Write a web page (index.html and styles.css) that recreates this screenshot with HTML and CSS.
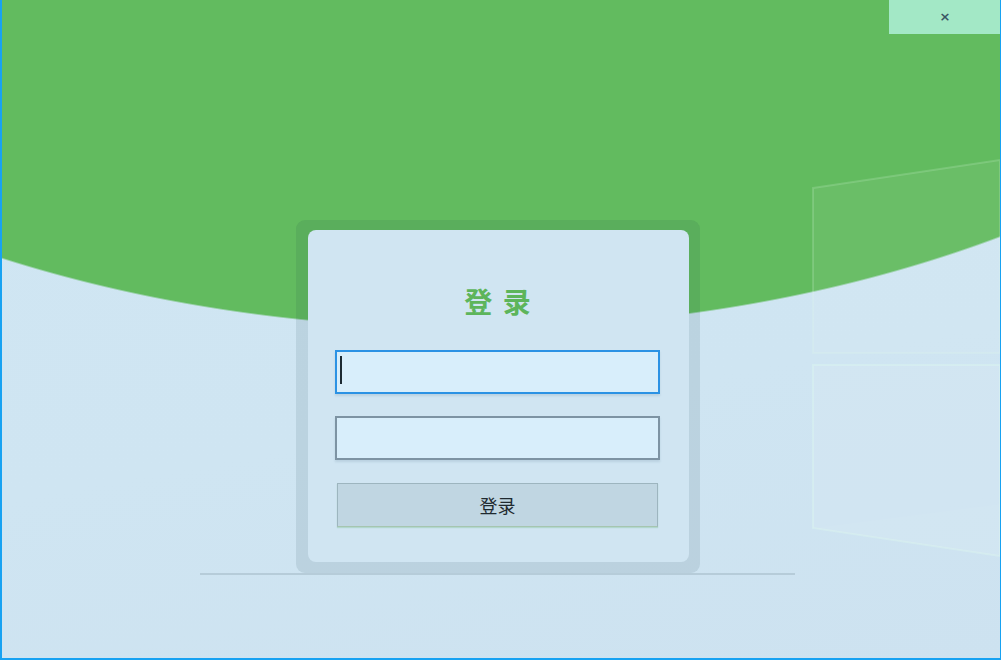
FILE: index.html
```html
<!DOCTYPE html>
<html lang="zh-CN">
<head>
<meta charset="utf-8">
<title>登录</title>
<link rel="stylesheet" href="styles.css">
</head>
<body>
<div class="window">
  <svg class="backdrop" width="998" height="658" viewBox="0 0 998 658" aria-hidden="true">
    <polygon points="811,188 998,160 998,353 811,353" fill="rgba(255,255,255,0.05)" stroke="rgba(225,255,235,0.18)" stroke-width="2"/>
    <polygon points="811,365 998,365 998,556 811,528" fill="rgba(255,255,255,0.07)" stroke="rgba(225,255,240,0.3)" stroke-width="2"/>
    <polygon points="811,528 998,504 998,556" fill="rgba(255,255,255,0.04)"/>
  </svg>
  <div class="titlebar">
    <button class="close" type="button" aria-label="关闭">×</button>
  </div>
  <div class="stage">
    <div class="frame">
      <form class="card">
        <h1 class="title">登 录</h1>
        <label class="field focused"><input type="text" aria-label="用户名"></label>
        <label class="field"><input type="password" aria-label="密码"></label>
        <button class="submit" type="button">登录</button>
      </form>
    </div>
  </div>
</div>
</body>
</html>
```
FILE: styles.css
```css
* { box-sizing: border-box; }
html, body { margin: 0; padding: 0; }
body {
  width: 1001px;
  height: 660px;
  overflow: hidden;
  font-family: "Noto Sans CJK SC", "Noto Sans", sans-serif;
}
.window {
  position: relative;
  width: 1001px;
  height: 660px;
  border-left: 2px solid #17a2f2;
  border-right: 1px solid #17a2f2;
  border-bottom: 2px solid #17a2f2;
  background:
    radial-gradient(ellipse 1000px 600px at 468px -271px, #62bb5f 99.7%, rgba(98,187,95,0) 100%),
    linear-gradient(170deg, #d0e6f3 0%, #cfe5f2 60%, #cde2f0 100%);
  display: flex;
  flex-direction: column;
}
.backdrop {
  position: absolute;
  left: 0;
  top: 0;
  pointer-events: none;
}
.titlebar {
  position: relative;
  display: flex;
  justify-content: flex-end;
  height: 34px;
}
.close {
  width: 111px;
  height: 34px;
  border: 0;
  margin: 0;
  padding: 0;
  background: #a3e8c6;
  color: #3a5564;
  font-family: "DejaVu Sans", sans-serif;
  font-size: 13px;
  font-weight: bold;
  line-height: 34px;
  text-align: center;
  padding-left: 1px;
}
.stage {
  position: relative;
  margin-top: 186px;
  margin-left: 198px;
  width: 595px;
  padding-left: 96px;
  border-bottom: 2px solid #b6ccd9;
}
.frame {
  width: 404px;
  height: 353px;
  padding: 10px 11px 11px 12px;
  border-radius: 9px;
  background: rgba(20, 60, 70, 0.1);
}
.card {
  height: 332px;
  margin: 0;
  border-radius: 8px;
  background: #d0e5f2;
  padding: 55px 29px 0 27px;
  display: flex;
  flex-direction: column;
}
.title {
  margin: 0;
  height: 32px;
  line-height: 32px;
  font-size: 28px;
  font-weight: bold;
  color: #5db55b;
  text-align: center;
  letter-spacing: 2px;
  padding-left: 2px;
}
.field {
  position: relative;
  display: block;
  height: 44px;
  margin-top: 33px;
  box-shadow: 0 2px 2px rgba(120, 150, 170, 0.25);
}
.field + .field { margin-top: 22px; }
.field input {
  display: block;
  width: 100%;
  height: 100%;
  margin: 0;
  border: 2px solid #7d93a3;
  background: #d8eefb;
  outline: none;
  padding: 0 6px;
  font-size: 16px;
}
.field.focused input { border-color: #2b92e4; }
.field.focused::before {
  content: "";
  position: absolute;
  left: 5px;
  top: 6px;
  width: 2px;
  height: 28px;
  background: #1c2a33;
}
.submit {
  margin: 23px 2px 0 2px;
  height: 44px;
  border: 1px solid #9db5bf;
  border-bottom-color: #a6c5b0;
  background: #c0d6e2;
  color: #1f2a30;
  font-family: "Noto Sans CJK SC", sans-serif;
  font-size: 18px;
  padding: 0;
  box-shadow: 0 1px 1px rgba(120, 190, 140, 0.35);
}
```
